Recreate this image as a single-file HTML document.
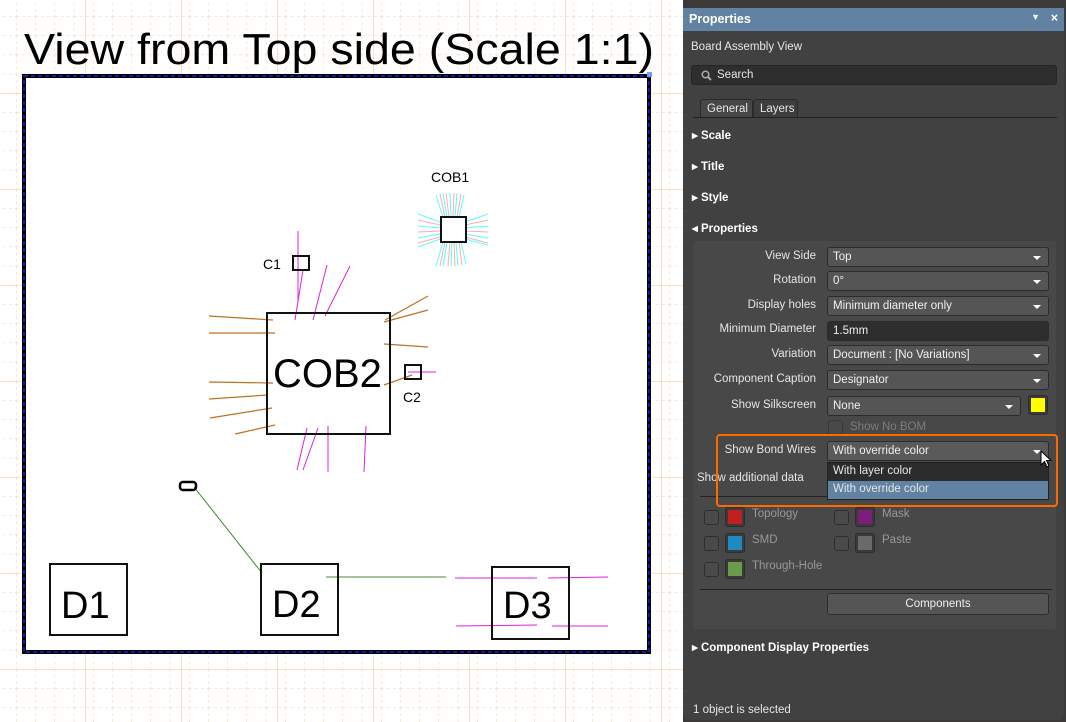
<!DOCTYPE html>
<html><head><meta charset="utf-8"><style>
*{margin:0;padding:0;box-sizing:border-box}
body{width:1066px;height:722px;overflow:hidden;background:#fff;font-family:"Liberation Sans",sans-serif;position:relative}
#cv{position:absolute;left:0;top:0}
.panel{position:absolute;left:683px;top:0;width:383px;height:722px;background:#3c3b3a}
.pin{position:absolute;left:0;top:8px;width:381px;height:712px;background:#414141;border-radius:0 0 8px 8px}
.hdr{position:absolute;left:0;top:0;width:381px;height:23px;background:#6282a3;color:#fff;font:bold 12.5px "Liberation Sans",sans-serif;padding:4px 6px}
.t{position:absolute;color:#e6e6e6;font:11.5px "Liberation Sans",sans-serif;white-space:nowrap}
.b{font-weight:bold;color:#fff}
.dd{position:absolute;left:144px;width:222px;height:20px;background:#555;border:1px solid #2c2c2c;border-radius:3px;color:#f0f0f0;font:11.5px "Liberation Sans",sans-serif;padding:3px 5px}
.dd:after{content:"";position:absolute;right:7px;top:8px;border:4px solid transparent;border-top:4px solid #fff;border-bottom:0}
.dd.e:after{display:none}
.lab{position:absolute;width:133px;text-align:right;color:#e6e6e6;font:11.5px "Liberation Sans",sans-serif}
.cb{position:absolute;width:15px;height:15px;background:#4a4a4a;border:1px solid #2e2e2e;border-radius:3px}
.sw{position:absolute;width:20px;height:20px;border:1px solid #2e2e2e;border-radius:3px;background:#3a3a3a;padding:2px}
.sw i{display:block;width:14px;height:14px}
</style></head><body>
<svg id="cv" width="683" height="722" viewBox="0 0 683 722">
<defs>
<pattern id="g" width="19.2" height="19.2" patternUnits="userSpaceOnUse" x="-3" y="-3">
<path d="M0 0H19.2M0 0V19.2" stroke="#f8cfa8" stroke-width="1" stroke-dasharray="3 3" fill="none"/>
</pattern>
<pattern id="G" width="96" height="96" patternUnits="userSpaceOnUse" x="-11" y="-3">
<path d="M0 0H96M0 0V96" stroke="#f5c195" stroke-width="1" fill="none"/>
</pattern>
</defs>
<rect width="683" height="722" fill="#fff"/>
<rect width="683" height="722" fill="url(#g)"/>
<rect width="683" height="722" fill="url(#G)"/>
<text x="24" y="64" font-size="44" textLength="630" lengthAdjust="spacingAndGlyphs" font-family="Liberation Sans" fill="#000">View from Top side (Scale 1:1)</text>
<rect x="24" y="76" width="625" height="576" fill="#fff" stroke="#000" stroke-width="4"/>
<rect x="24" y="76" width="625" height="576" fill="none" stroke="#1a1aff" stroke-width="1.5" stroke-dasharray="4 3"/>
<rect x="647" y="72" width="5" height="5" fill="#6aa0ff"/>
<g font-family="Liberation Sans" fill="#000">
<text x="431" y="182" font-size="14">COB1</text>
<text x="263" y="269" font-size="14">C1</text>
<text x="403" y="402" font-size="14">C2</text>
<text x="273" y="387" font-size="40">COB2</text>
<text x="61" y="618" font-size="38">D1</text>
<text x="272" y="617" font-size="38">D2</text>
<text x="503" y="618" font-size="38">D3</text>
</g>
<g stroke-width="1" fill="none">
<g stroke="#5ff">
<path d="M443 217L436 195M447 217L443 193M451 217L450 193M455 217L457 193M459 217L464 195M443 242L436 266M447 242L443 266M452 242L451 266M456 242L458 266M461 242L466 264M440 222L418 214M440 228L418 226M440 234L418 238M465 222L488 214M465 228L488 226M465 234L488 238M465 239L488 245M440 239L418 247"/>
</g>
<g stroke="#faa">
<path d="M445 217L440 194M449 217L446 193M453 217L454 193M457 217L461 194M445 242L440 266M450 242L448 266M454 242L455 266M459 242L462 265M440 225L418 220M440 231L418 232M440 237L418 243M465 225L488 220M465 231L488 232M465 237L488 243"/>
</g>
<g stroke="#e020e0">
<path d="M298 231L298 300M303 270L295 320M327 265L313 320M350 266L325 316M307 428L297 470M318 428L303 470M328 426L328 472M366 426L364 472M408 372L436 372"/>
</g>
<g stroke="#c07020" stroke-width="1.2">
<path d="M209 316L273 320M209 333L275 333M209 382L273 383M209 399L268 395M210 418L272 408M235 434L275 425M385 320L428 296M384 322L428 310M384 344L428 347M384 385L412 375"/>
</g>
<path d="M194 487L262 573" stroke="#3a8a2a"/>
<path d="M326 577L446 577" stroke="#4a8a3a"/>
<g stroke="#e020e0">
<path d="M455 578L537 578M548 578L608 577M456 626L537 625M552 626L608 626"/>
</g>
</g>
<g fill="none" stroke="#111" stroke-width="2">
<rect x="441" y="217" width="25" height="25"/>
<rect x="293" y="256" width="16" height="14"/>
<rect x="405" y="365" width="16" height="14"/>
<rect x="267" y="313" width="123" height="121"/>
<rect x="50" y="564" width="77" height="71"/>
<rect x="261" y="564" width="77" height="71"/>
<rect x="492" y="567" width="77" height="72"/>
</g>
<rect x="180" y="482" width="16" height="8" rx="3" fill="none" stroke="#000" stroke-width="2.5"/>
</svg>

<div class="panel">
<div class="pin">
<div class="hdr">Properties<span style="position:absolute;right:24px;top:4px;font-size:9px">▼</span><span style="position:absolute;right:6px;top:3px">×</span></div>
<div class="t" style="left:8px;top:33px">Board Assembly View</div>
<div style="position:absolute;left:8px;top:57px;width:366px;height:20px;background:#2e2e2e;border:1px solid #262626;border-radius:3px"></div>
<svg style="position:absolute;left:18px;top:62px" width="11" height="11"><circle cx="4.5" cy="4.5" r="3.3" stroke="#aaa" stroke-width="1.5" fill="none"/><path d="M7 7L10 10" stroke="#aaa" stroke-width="2"/></svg>
<div class="t" style="left:34px;top:61px">Search</div>
<div style="position:absolute;left:17px;top:91px;width:53px;height:18px;background:#474747;border:1px solid #2a2a2a;border-bottom:0;border-radius:3px 3px 0 0"></div>
<div style="position:absolute;left:70px;top:91px;width:45px;height:18px;background:#3d3d3d;border:1px solid #2a2a2a;border-bottom:0;border-radius:3px 3px 0 0"></div>
<div class="t" style="left:24px;top:95px">General</div>
<div class="t" style="left:77px;top:95px">Layers</div>
<div style="position:absolute;left:10px;top:109px;width:364px;height:1px;background:#222"></div>
<div class="t b" style="left:9px;top:120px">▸ Scale</div>
<div class="t b" style="left:9px;top:151px">▸ Title</div>
<div class="t b" style="left:9px;top:182px">▸ Style</div>
<div class="t b" style="left:9px;top:213px">◂ Properties</div>
<div style="position:absolute;left:10px;top:233px;width:363px;height:388px;background:#484848;border-radius:3px"></div>
<div class="lab" style="top:242px">View Side</div><div class="dd" style="top:239px">Top</div>
<div class="lab" style="top:266px">Rotation</div><div class="dd" style="top:263px">0°</div>
<div class="lab" style="top:291px">Display holes</div><div class="dd" style="top:288px">Minimum diameter only</div>
<div class="lab" style="top:315px">Minimum Diameter</div><div class="dd e" style="top:313px;background:#2e2e2e">1.5mm</div>
<div class="lab" style="top:340px">Variation</div><div class="dd" style="top:337px">Document : [No Variations]</div>
<div class="lab" style="top:365px">Component Caption</div><div class="dd" style="top:362px">Designator</div>
<div class="lab" style="top:391px">Show Silkscreen</div><div class="dd" style="top:388px;width:194px">None</div>
<div class="sw" style="left:345px;top:387px"><i style="background:#ff0"></i></div>
<div class="cb" style="left:145px;top:412px;opacity:.6"></div>
<div class="t" style="left:167px;top:413px;color:#7d7d7d">Show No BOM</div>
<div class="lab" style="top:436px">Show Bond Wires</div>
<div class="dd" style="top:433px;background:#5a5a5a">With override color</div>
<div style="position:absolute;left:144px;top:454px;width:222px;height:38px;background:#2c2c2c;border:1px solid #222"></div>
<div style="position:absolute;left:145px;top:473px;width:220px;height:18px;background:#6182a3"></div>
<div class="t" style="left:150px;top:457px">With layer color</div>
<div class="t" style="left:150px;top:475px">With override color</div>
<div class="t" style="left:14px;top:464px">Show additional data</div>
<div style="position:absolute;left:17px;top:488px;width:127px;height:1px;background:#222"></div>
<div class="cb" style="left:21px;top:502px"></div><div class="sw" style="left:42px;top:499px"><i style="background:#c0201f"></i></div><div class="t" style="left:69px;top:500px;color:#999">Topology</div>
<div class="cb" style="left:151px;top:502px"></div><div class="sw" style="left:172px;top:499px"><i style="background:#7d1e7d"></i></div><div class="t" style="left:199px;top:500px;color:#999">Mask</div>
<div class="cb" style="left:21px;top:528px"></div><div class="sw" style="left:42px;top:525px"><i style="background:#1e8bc0"></i></div><div class="t" style="left:69px;top:526px;color:#999">SMD</div>
<div class="cb" style="left:151px;top:528px"></div><div class="sw" style="left:172px;top:525px"><i style="background:#6a6a6a"></i></div><div class="t" style="left:199px;top:526px;color:#999">Paste</div>
<div class="cb" style="left:21px;top:554px"></div><div class="sw" style="left:42px;top:551px"><i style="background:#6a9a4a"></i></div><div class="t" style="left:69px;top:552px;color:#999">Through-Hole</div>
<div style="position:absolute;left:17px;top:581px;width:352px;height:1px;background:#222"></div>
<div style="position:absolute;left:144px;top:585px;width:222px;height:22px;background:#555;border:1px solid #2c2c2c;border-radius:3px;color:#f0f0f0;font:11.5px 'Liberation Sans',sans-serif;text-align:center;padding-top:4px">Components</div>
<div style="position:absolute;left:33px;top:426px;width:342px;height:73px;border:2px solid #ff6a00;border-radius:4px"></div>
<svg style="position:absolute;left:357px;top:442px" width="14" height="20"><path d="M1 1L1 15L4.5 11.5L7 17L9 16L6.5 10.5L11 10.5Z" fill="#fff" stroke="#000" stroke-width="1"/></svg>
<div class="t b" style="left:9px;top:632px">▸ Component Display Properties</div>
<div class="t" style="left:10px;top:696px">1 object is selected</div>
</div>
</div>
</body></html>
